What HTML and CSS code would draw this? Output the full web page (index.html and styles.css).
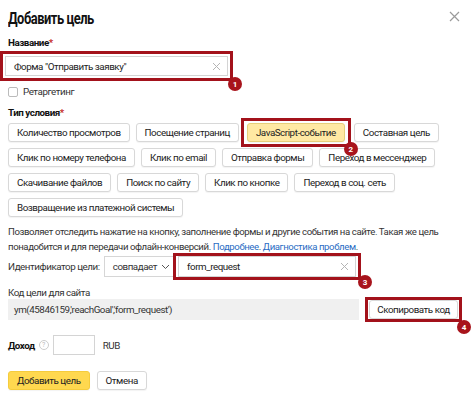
FILE: index.html
```html
<!DOCTYPE html>
<html lang="ru">
<head>
<meta charset="utf-8">
<link rel="stylesheet" href="styles.css">
</head>
<body>
<div class="dialog">
  <div class="head">
    <h1 class="title">Добавить цель</h1>
    <svg class="close" width="11" height="11" viewBox="0 0 11 11"><path d="M1 1L10 10M10 1L1 10" stroke="#9a9a9a" stroke-width="1.2"/></svg>
  </div>

  <div class="label">Название<span class="req">*</span></div>
  <div class="mark mark-name">
    <div class="input input-name"><span>Форма "Отправить заявку"</span><svg class="x" width="9" height="9" viewBox="0 0 9 9"><path d="M1 1L8 8M8 1L1 8" stroke="#b5b5b5" stroke-width="1"/></svg></div>
    <span class="badge">1</span>
  </div>

  <label class="check"><span class="box"></span>Ретаргетинг</label>

  <div class="label label-type">Тип условия<span class="req">*</span></div>
  <div class="types">
    <div class="row">
      <span class="btn">Количество просмотров</span>
      <span class="btn">Посещение страниц</span>
      <span class="mark mark-js"><span class="btn active">JavaScript-событие</span><span class="badge">2</span></span>
      <span class="btn">Составная цель</span>
    </div>
    <div class="row">
      <span class="btn">Клик по номеру телефона</span>
      <span class="btn">Клик по email</span>
      <span class="btn">Отправка формы</span>
      <span class="btn">Переход в мессенджер</span>
    </div>
    <div class="row">
      <span class="btn">Скачивание файлов</span>
      <span class="btn">Поиск по сайту</span>
      <span class="btn">Клик по кнопке</span>
      <span class="btn">Переход в соц. сеть</span>
    </div>
    <div class="row">
      <span class="btn">Возвращение из платежной системы</span>
    </div>
  </div>

  <p class="desc">Позволяет отследить нажатие на кнопку, заполнение формы и другие события на сайте. Такая же цель<br>понадобится и для передачи офлайн-конверсий. <a href="#">Подробнее</a>. <a href="#">Диагностика проблем</a>.</p>

  <div class="ident">
    <span class="ident-label">Идентификатор цели:</span>
    <span class="select">совпадает <svg width="9" height="6" viewBox="0 0 9 6"><path d="M1 1L4.5 4.5L8 1" fill="none" stroke="#555" stroke-width="1"/></svg></span>
    <span class="mark mark-id">
      <span class="input input-id"><span>form_request</span><svg class="x" width="9" height="9" viewBox="0 0 9 9"><path d="M1 1L8 8M8 1L1 8" stroke="#b5b5b5" stroke-width="1"/></svg></span>
      <span class="badge">3</span>
    </span>
  </div>

  <div class="code-label">Код цели для сайта</div>
  <div class="code-row">
    <div class="code">ym(45846159,'reachGoal','form_request')</div>
    <span class="mark mark-copy"><span class="btn copy">Скопировать код</span><span class="badge">4</span></span>
  </div>

  <div class="income">
    <span class="income-label">Доход</span>
    <span class="help">?</span>
    <span class="input input-sum"></span>
    <span class="cur">RUB</span>
  </div>

  <div class="actions">
    <span class="btn primary">Добавить цель</span>
    <span class="btn">Отмена</span>
  </div>
</div>
</body>
</html>
```
FILE: styles.css
```css
* { box-sizing: border-box; }
html, body { margin: 0; padding: 0; background: #fff; }
body {
  font-family: Roboto, "Liberation Sans", Arial, sans-serif;
  color: #222;
  font-size: 9.8px;
  letter-spacing: -0.45px;
  width: 474px;
  height: 403px;
  overflow: hidden;
}
.dialog { padding: 8px 0 0 8px; position: relative; }
.head { display: flex; justify-content: space-between; align-items: center; padding-right: 14px; height: 20px; }
.title {
  margin: 0; font-size: 16.5px; font-weight: bold; color: #111; letter-spacing: -0.6px;
  transform: scaleX(0.78); transform-origin: left center; white-space: nowrap;
}
.close { display: block; margin-top: -4px; }

.label { font-weight: bold; font-size: 9.8px; margin-top: 9px; color: #111; line-height: 12px; }
.req { color: #c62828; }

.mark { position: relative; display: inline-flex; border: 3px solid #a3121b; padding: 2px; }
.badge {
  position: absolute;
  width: 14px; height: 14px; border-radius: 50%;
  background: #a8141c; color: #fff;
  font-size: 8px; font-weight: bold; letter-spacing: 0;
  display: flex; align-items: center; justify-content: center;
  right: -12px; bottom: -13px;
  z-index: 2;
}

.mark-name { margin-left: -8px; margin-top: 2px; }
.input {
  display: flex; align-items: center; justify-content: space-between;
  border: 1px solid #d4d4d4; background: #fff; height: 20px; padding: 0 6px 0 8px;
  color: #222;
}
.input-name { width: 223px; }
.x { display: block; }

.check { display: flex; align-items: center; gap: 5px; margin-top: 5px; color: #333; line-height: 12px; }
.box { width: 10px; height: 10px; border: 1px solid #bbb; border-radius: 2px; background: #fff; }

.label-type { margin-top: 9px; }
.types { margin-top: 4px; display: flex; flex-direction: column; gap: 6px; }
.row { display: flex; align-items: center; gap: 6px; height: 19px; }

.btn {
  display: inline-flex; align-items: center; justify-content: center;
  height: 19px; padding: 0 8px;
  border: 1px solid #d8d8d8; border-radius: 3px;
  background: #fff; color: #222;
  box-shadow: 0 1px 1px rgba(0,0,0,0.05);
  white-space: nowrap;
}
.mark-js { margin: -6px -3px -6px -4px; padding: 2px 3px; }
.mark-js .badge { right: -10px; bottom: -12px; }
.btn.active { background: #ffe9a3; border-color: #e6cf7a; }

.desc { margin: 7px 0 0 0; font-size: 9.6px; letter-spacing: -0.4px; line-height: 15px; color: #333; }
.desc a { color: #2a6cc4; text-decoration: none; }

.ident { display: flex; align-items: center; margin-top: -1px; }
.ident-label { color: #333; margin-right: 4px; }
.select {
  display: inline-flex; align-items: center; gap: 4px;
  height: 21px; border: 1px solid #d6d6d6; border-right: none; padding: 0 3px 0 8px; color: #333;
}
.mark-id { padding: 0 2px; }
.input-id { width: 178px; height: 21px; }
.mark-id .badge { right: -14px; bottom: -12px; }

.code-label { margin-top: 7px; color: #333; line-height: 12px; }
.code-row { display: flex; align-items: center; margin-top: -2px; }
.code { width: 351px; height: 21px; background: #f0f0f0; display: flex; align-items: center; padding-left: 6px; color: #333; }
.mark-copy { margin-left: 6px; padding: 0 1px; }
.copy { width: 89px; padding: 0; }
.mark-copy .badge { right: -12px; bottom: -15px; }

.income { display: flex; align-items: center; margin-top: 13px; }
.income-label { font-weight: bold; color: #111; }
.help { width: 10px; height: 10px; border: 1px solid #ccc; border-radius: 50%; color: #bbb; font-size: 7px; display: inline-flex; align-items: center; justify-content: center; margin-left: 4px; letter-spacing: 0; }
.input-sum { width: 42px; height: 20px; margin-left: 4px; }
.cur { margin-left: 8px; color: #333; }

.actions { display: flex; gap: 7px; margin-top: 16px; }
.primary { background: #ffd84f; border-color: #f5cc3d; }
```
